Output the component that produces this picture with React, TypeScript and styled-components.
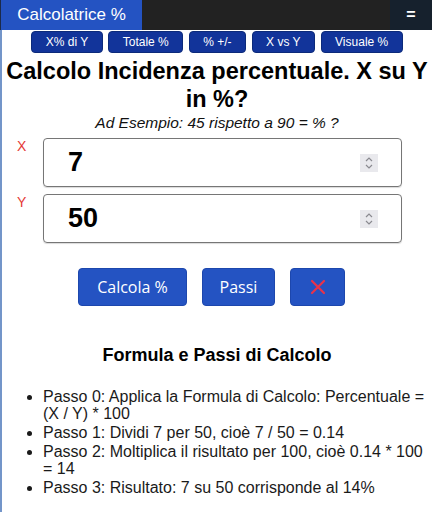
import React from "react";
import styled, { createGlobalStyle } from "styled-components";

const Global = createGlobalStyle`
  html, body { margin: 0; padding: 0; background: #fff; }
  body { font-family: "Liberation Sans", Arial, sans-serif; width: 432px; }
  * { box-sizing: border-box; }
`;

const TopBar = styled.header`
  display: flex;
  height: 30px;
  background: #222222;
`;

const BrandTab = styled.div`
  width: 142px;
  display: flex;
  align-items: center;
  justify-content: center;
  background: #2453c2;
  border-left: 1px solid #1b2a4a;
  color: #fff;
  font-size: 17px;
`;

const Spacer = styled.div`
  flex: 1;
`;

const MenuButton = styled.div`
  width: 42px;
  display: flex;
  align-items: center;
  justify-content: center;
  background: #16212d;
  color: #fff;
  font-size: 16px;
  font-weight: bold;
`;

const Main = styled.main`
  border-left: 2px solid #7395c9;
  min-height: 482px;
  display: flex;
  flex-direction: column;
`;

const NavRow = styled.nav`
  display: flex;
  justify-content: center;
  gap: 5.5px;
  padding-top: 1px;
`;

const NavButton = styled.div`
  height: 22px;
  padding: 0 13.5px;
  display: flex;
  align-items: center;
  background: #12349a;
  border: 1px solid #0c2a7a;
  border-radius: 4px;
  color: #fff;
  font-size: 12px;
`;

const Title = styled.h1`
  margin: 4px 0 0;
  padding: 0 2px;
  text-align: center;
  font-size: 23.5px;
  line-height: 28px;
  font-weight: bold;
  color: #000;
`;

const Example = styled.p`
  margin: 0;
  text-align: center;
  font-style: italic;
  font-size: 15.5px;
  line-height: 20px;
  color: #111;
`;

const Fields = styled.div`
  display: flex;
  flex-direction: column;
  gap: 7px;
  margin-top: 5px;
`;

const FieldRow = styled.div`
  display: flex;
  align-items: flex-start;
`;

const FieldLabel = styled.label`
  width: 41px;
  padding-left: 15px;
  color: #e53935;
  font-size: 14px;
`;

const InputBox = styled.div`
  width: 359px;
  height: 49px;
  border: 1px solid #767676;
  border-radius: 4px;
  display: flex;
  align-items: center;
  padding: 0 23px 0 24px;
  box-shadow: 0 1px 1px rgba(0,0,0,0.15);
`;

const Value = styled.span`
  flex: 1;
  font-size: 27px;
  font-weight: bold;
  color: #000;
`;

const Spinner = styled.span`
  width: 18px;
  height: 18px;
  background: #e9e9ed;
  display: flex;
  align-items: center;
  justify-content: center;
`;

const ActionRow = styled.div`
  display: flex;
  justify-content: center;
  gap: 15px;
  margin-top: 25px;
  padding-right: 11px;
`;

const ActionButton = styled.button<{ $w: number }>`
  width: ${(p) => p.$w}px;
  height: 38px;
  background: #2453c2;
  border: 1px solid #1d47ad;
  border-radius: 4px;
  color: #fff;
  font-family: "Open Sans", "Noto Sans", sans-serif;
  font-size: 16px;
  display: flex;
  align-items: center;
  justify-content: center;
  padding: 0;
`;

const SectionTitle = styled.h2`
  margin: 38px 0 0;
  text-align: center;
  font-size: 18px;
  line-height: 22px;
  font-weight: bold;
  color: #000;
`;

const Steps = styled.ul`
  margin: 22px 0 0;
  padding: 0 4px 0 41px;
  font-size: 16px;
  line-height: 17px;
  color: #1a1a1a;
`;

const Step = styled.li`
  margin-bottom: 2px;
`;

const SpinIcon = () => (
  <svg width="10" height="14" viewBox="0 0 10 14">
    <path d="M2 5 L5 2 L8 5" fill="none" stroke="#8a8a90" strokeWidth="1.2" />
    <path d="M2 9 L5 12 L8 9" fill="none" stroke="#8a8a90" strokeWidth="1.2" />
  </svg>
);

const CloseIcon = () => (
  <svg width="16" height="16" viewBox="0 0 16 16">
    <path d="M2 2 L14 14 M14 2 L2 14" stroke="#e8334a" strokeWidth="2.2" strokeLinecap="round" />
  </svg>
);

export default function App() {
  return (
    <>
      <Global />
      <TopBar>
        <BrandTab>Calcolatrice %</BrandTab>
        <Spacer />
        <MenuButton>=</MenuButton>
      </TopBar>
      <Main>
        <NavRow>
          <NavButton>X% di Y</NavButton>
          <NavButton>Totale %</NavButton>
          <NavButton>% +/-</NavButton>
          <NavButton>X vs Y</NavButton>
          <NavButton>Visuale %</NavButton>
        </NavRow>
        <Title>Calcolo Incidenza percentuale. X su Y in %?</Title>
        <Example>Ad Esempio: 45 rispetto a 90 = % ?</Example>
        <Fields>
          <FieldRow>
            <FieldLabel>X</FieldLabel>
            <InputBox>
              <Value>7</Value>
              <Spinner>
                <SpinIcon />
              </Spinner>
            </InputBox>
          </FieldRow>
          <FieldRow>
            <FieldLabel>Y</FieldLabel>
            <InputBox>
              <Value>50</Value>
              <Spinner>
                <SpinIcon />
              </Spinner>
            </InputBox>
          </FieldRow>
        </Fields>
        <ActionRow>
          <ActionButton $w={109}>Calcola %</ActionButton>
          <ActionButton $w={73}>Passi</ActionButton>
          <ActionButton $w={55}>
            <CloseIcon />
          </ActionButton>
        </ActionRow>
        <SectionTitle>Formula e Passi di Calcolo</SectionTitle>
        <Steps>
          <Step>Passo 0: Applica la Formula di Calcolo: Percentuale = (X / Y) * 100</Step>
          <Step>Passo 1: Dividi 7 per 50, cioè 7 / 50 = 0.14</Step>
          <Step>Passo 2: Moltiplica il risultato per 100, cioè 0.14 * 100 = 14</Step>
          <Step>Passo 3: Risultato: 7 su 50 corrisponde al 14%</Step>
        </Steps>
      </Main>
    </>
  );
}
